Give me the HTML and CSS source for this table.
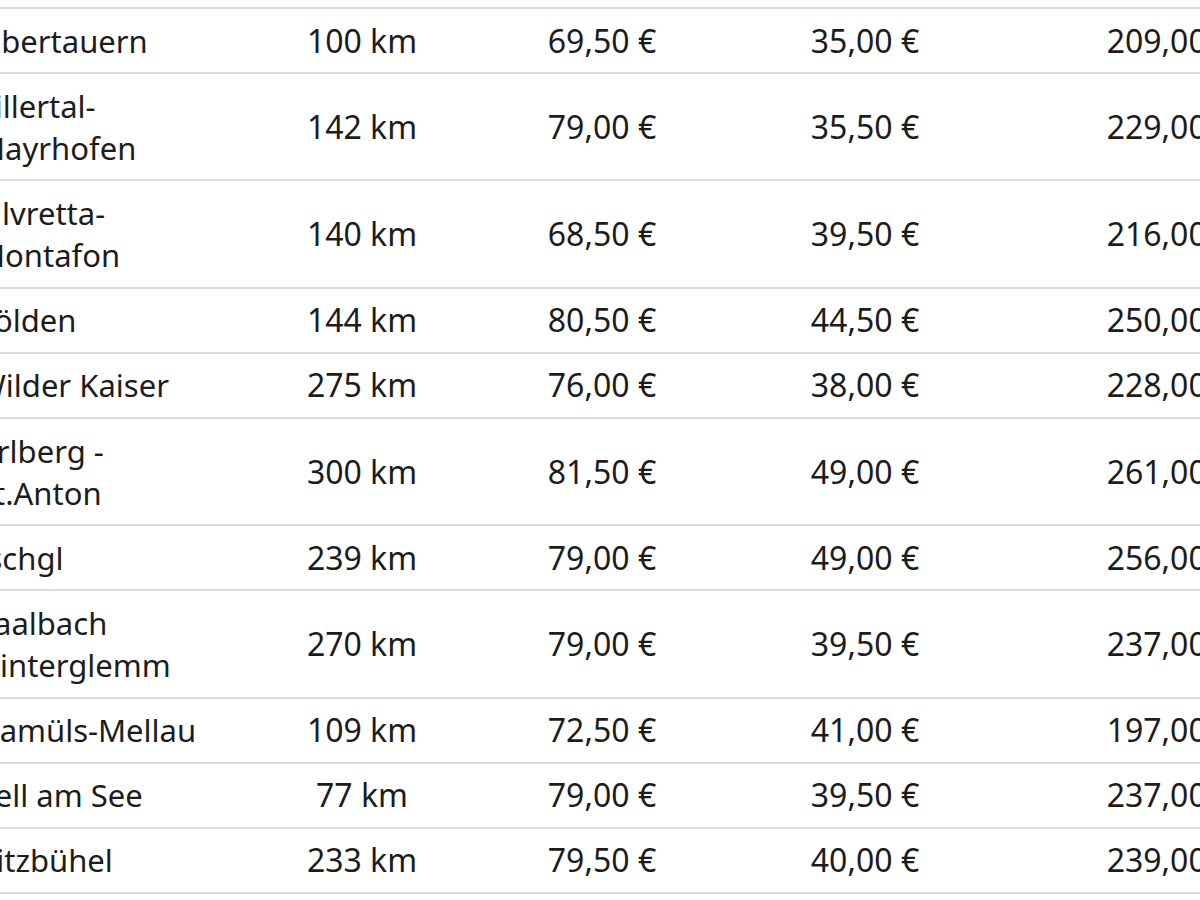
FILE: index.html
```html
<!DOCTYPE html>
<html lang="de">
<head>
<meta charset="utf-8">
<title>Skigebiete Preise</title>
<link rel="stylesheet" href="styles.css">
</head>
<body>
<table class="prices">
  <colgroup>
    <col class="c-name">
    <col class="c-km">
    <col class="c-day">
    <col class="c-kid">
    <col class="c-week">
  </colgroup>
  <tbody>
    <tr><td class="name">Obertauern</td><td>100 km</td><td>69,50 €</td><td>35,00 €</td><td>209,00 €</td></tr>
    <tr><td class="name">Zillertal-Mayrhofen</td><td>142 km</td><td>79,00 €</td><td>35,50 €</td><td>229,00 €</td></tr>
    <tr><td class="name">Silvretta-Montafon</td><td>140 km</td><td>68,50 €</td><td>39,50 €</td><td>216,00 €</td></tr>
    <tr><td class="name">Sölden</td><td>144 km</td><td>80,50 €</td><td>44,50 €</td><td>250,00 €</td></tr>
    <tr><td class="name">Wilder Kaiser</td><td>275 km</td><td>76,00 €</td><td>38,00 €</td><td>228,00 €</td></tr>
    <tr><td class="name">Arlberg - St.Anton</td><td>300 km</td><td>81,50 €</td><td>49,00 €</td><td>261,00 €</td></tr>
    <tr><td class="name">Ischgl</td><td>239 km</td><td>79,00 €</td><td>49,00 €</td><td>256,00 €</td></tr>
    <tr><td class="name">Saalbach Hinterglemm</td><td>270 km</td><td>79,00 €</td><td>39,50 €</td><td>237,00 €</td></tr>
    <tr><td class="name">Damüls-Mellau</td><td>109 km</td><td>72,50 €</td><td>41,00 €</td><td>197,00 €</td></tr>
    <tr><td class="name">Zell am See</td><td>77 km</td><td>79,00 €</td><td>39,50 €</td><td>237,00 €</td></tr>
    <tr><td class="name">Kitzbühel</td><td>233 km</td><td>79,50 €</td><td>40,00 €</td><td>239,00 €</td></tr>
  </tbody>
</table>
</body>
</html>
```

FILE: styles.css
```css
html, body {
  margin: 0;
  padding: 0;
  background: #ffffff;
  overflow: hidden;
}

body {
  width: 1200px;
  height: 900px;
  font-family: "Noto Sans", "Open Sans", sans-serif;
  color: #1c1c1c;
}

.prices {
  margin-top: 7px;
  margin-left: -34px;
  width: 1366px;
  table-layout: fixed;
  border-collapse: collapse;
  border-top: 2px solid #dcdcdc;
  font-size: 32px;
  line-height: 42px;
}

.c-name { width: 276px; }
.c-km   { width: 240px; }
.c-day  { width: 240px; }
.c-kid  { width: 286px; }
.c-week { width: 324px; }

.prices td {
  padding: 10.6px 12px;
  border-bottom: 2px solid #dcdcdc;
  text-align: center;
  vertical-align: middle;
  white-space: nowrap;
}

.prices td.name {
  font-size: 31px;
  text-align: left;
  white-space: normal;
  padding-left: 11px;
  padding-right: 30px;
}
```
